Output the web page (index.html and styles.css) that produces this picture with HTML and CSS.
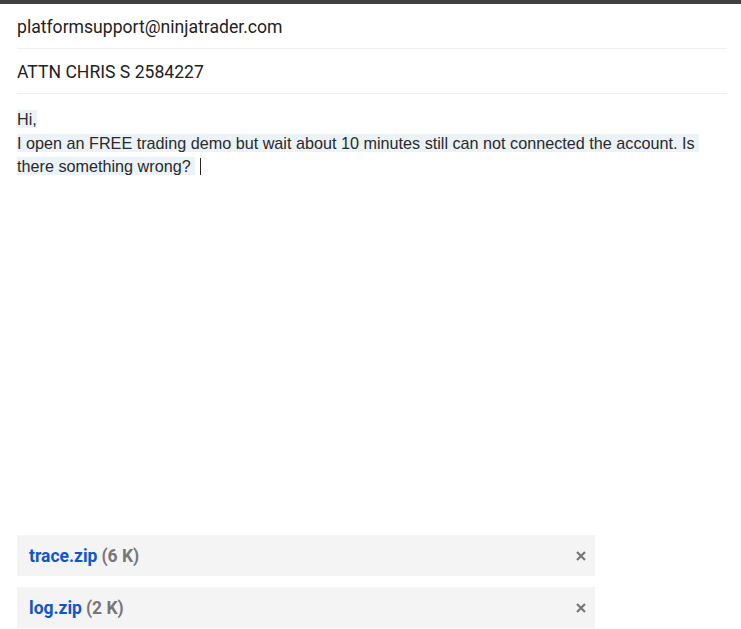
FILE: index.html
```html
<!DOCTYPE html>
<html>
<head>
<meta charset="utf-8">
<link rel="stylesheet" href="styles.css">
</head>
<body>
<div class="page">
  <div class="topbar"></div>
  <div class="fields">
    <div class="field">platformsupport@ninjatrader.com</div>
    <div class="field">ATTN CHRIS S 2584227</div>
  </div>
  <div class="message">
    <div class="line"><span class="hl">Hi,</span></div>
    <div class="line"><span class="hl">I open an FREE trading demo but wait about 10 minutes still can not connected the account. Is </span><br><span class="hl">there something wrong? </span><span class="caret"></span></div>
  </div>
  <div class="attachments">
    <div class="attachment">
      <span class="att-name">trace.zip</span><span class="att-size">(6 K)</span>
      <svg class="att-x" width="10" height="10" viewBox="0 0 10 10"><path d="M1 1 L9 9 M9 1 L1 9" stroke="#777" stroke-width="2.2" fill="none"/></svg>
    </div>
    <div class="attachment">
      <span class="att-name">log.zip</span><span class="att-size">(2 K)</span>
      <svg class="att-x" width="10" height="10" viewBox="0 0 10 10"><path d="M1 1 L9 9 M9 1 L1 9" stroke="#777" stroke-width="2.2" fill="none"/></svg>
    </div>
  </div>
</div>
</body>
</html>
```

FILE: styles.css
```css
html, body {
  margin: 0;
  padding: 0;
  background: #fff;
}
.page {
  height: 629px;
  display: flex;
  flex-direction: column;
  overflow: hidden;
}
.topbar {
  height: 4px;
  background: #404040;
  flex: none;
}
.fields {
  padding: 0 14px 0 17px;
  flex: none;
}
.field {
  height: 44px;
  box-sizing: content-box;
  padding-top: 1px;
  height: 43px;
  border-bottom: 1px solid #eceff3;
  display: flex;
  align-items: center;
  font-family: Roboto, "Liberation Sans", sans-serif;
  font-size: 17.6px;
  color: #222;
}
.message {
  flex: 1;
  padding: 14px 14px 0 17px;
  font-family: "Liberation Sans", Arial, sans-serif;
  font-size: 16.2px;
  line-height: 23.5px;
  color: #2a2a2a;
}
.hl {
  background: #ebf3f8;
  white-space: pre-wrap;
}
.caret {
  display: inline-block;
  width: 1px;
  height: 17px;
  background: #222;
  vertical-align: -3px;
  margin-left: 5px;
}
.attachments {
  flex: none;
  display: flex;
  flex-direction: column;
  gap: 11px;
  padding: 0 0 1px 17px;
}
.attachment {
  width: 578px;
  height: 41px;
  box-sizing: border-box;
  background: #f4f4f4;
  display: flex;
  align-items: center;
  padding: 0 9px 0 12px;
  font-family: Roboto, "Liberation Sans", sans-serif;
  font-size: 17.5px;
  font-weight: bold;
}
.att-name {
  color: #1155cc;
}
.att-size {
  color: #777;
  margin-left: 4px;
}
.att-x {
  margin-left: auto;
}
```
